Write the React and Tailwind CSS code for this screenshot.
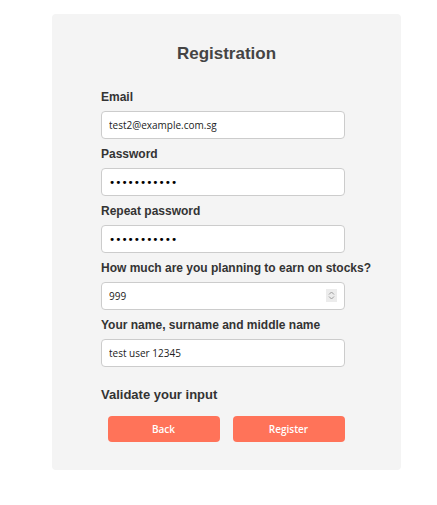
import { useState } from "react";

const labelCls =
  "h-[29px] flex items-center text-[12px] font-bold text-[#333] font-['Liberation_Sans',Arial,sans-serif]";
const inputCls =
  "block w-[244px] h-[28px] rounded-[4px] border border-[#ccc] bg-white px-[7px] text-[10px] text-[#222] outline-none font-['Open_Sans',sans-serif]";
const passCls =
  "block w-[244px] h-[28px] rounded-[4px] border border-[#ccc] bg-white px-[7px] text-[10.5px] text-black outline-none font-['DejaVu_Sans',sans-serif]";

export default function App() {
  const [email, setEmail] = useState("test2@example.com.sg");
  const [password, setPassword] = useState("12345678901");
  const [repeat, setRepeat] = useState("12345678901");
  const [earn, setEarn] = useState("999");
  const [name, setName] = useState("test user 12345");

  return (
    <div className="min-h-[505px] bg-white pt-[14px] pl-[52px]">
      <div className="w-[349px] h-[456px] rounded-[4px] bg-[#f4f4f4] pt-[30px]">
        <h1 className="h-[20px] leading-[20px] text-center text-[17px] font-bold text-[#444] font-['Liberation_Sans',Arial,sans-serif] mb-[18px]">
          Registration
        </h1>
        <form className="w-[250px] ml-[49px]" onSubmit={(e) => e.preventDefault()}>
          <label className={labelCls}>Email</label>
          <input
            className={inputCls}
            type="email"
            value={email}
            onChange={(e) => setEmail(e.target.value)}
          />
          <label className={labelCls}>Password</label>
          <input
            className={passCls}
            type="password"
            value={password}
            onChange={(e) => setPassword(e.target.value)}
          />
          <label className={labelCls}>Repeat password</label>
          <input
            className={passCls}
            type="password"
            value={repeat}
            onChange={(e) => setRepeat(e.target.value)}
          />
          <label className={labelCls + " whitespace-nowrap"}>
            How much are you planning to earn on stocks?
          </label>
          <div className="relative w-[244px]">
            <input
              className={
                inputCls +
                " [appearance:textfield] [&::-webkit-inner-spin-button]:appearance-none [&::-webkit-outer-spin-button]:appearance-none"
              }
              type="number"
              value={earn}
              onChange={(e) => setEarn(e.target.value)}
            />
            {/* spinner */}
            <span className="pointer-events-none absolute right-[8px] top-[7px] flex h-[13px] w-[11px] flex-col items-center justify-center gap-[1px] bg-[#ececec]">
              <svg width="7" height="4" viewBox="0 0 7 4">
                <path d="M1 3.5 L3.5 1 L6 3.5" fill="none" stroke="#9a9a9a" strokeWidth="1" />
              </svg>
              <svg width="7" height="4" viewBox="0 0 7 4">
                <path d="M1 0.5 L3.5 3 L6 0.5" fill="none" stroke="#9a9a9a" strokeWidth="1" />
              </svg>
            </span>
          </div>
          <label className={labelCls}>Your name, surname and middle name</label>
          <input
            className={inputCls}
            type="text"
            value={name}
            onChange={(e) => setName(e.target.value)}
          />
          <h2 className="mt-[20px] h-[16px] leading-[16px] text-[13px] font-bold text-[#333] font-['Liberation_Sans',Arial,sans-serif]">
            Validate your input
          </h2>
          <div className="mt-[13px] flex">
            <button
              type="button"
              className="mx-[6.5px] flex-1 h-[26px] rounded-[4px] bg-[#ff7359] text-white text-[10px] font-semibold font-['Open_Sans',sans-serif]"
            >
              Back
            </button>
            <button
              type="submit"
              className="mx-[6.5px] flex-1 h-[26px] rounded-[4px] bg-[#ff7359] text-white text-[10px] font-semibold font-['Open_Sans',sans-serif]"
            >
              Register
            </button>
          </div>
        </form>
      </div>
    </div>
  );
}
